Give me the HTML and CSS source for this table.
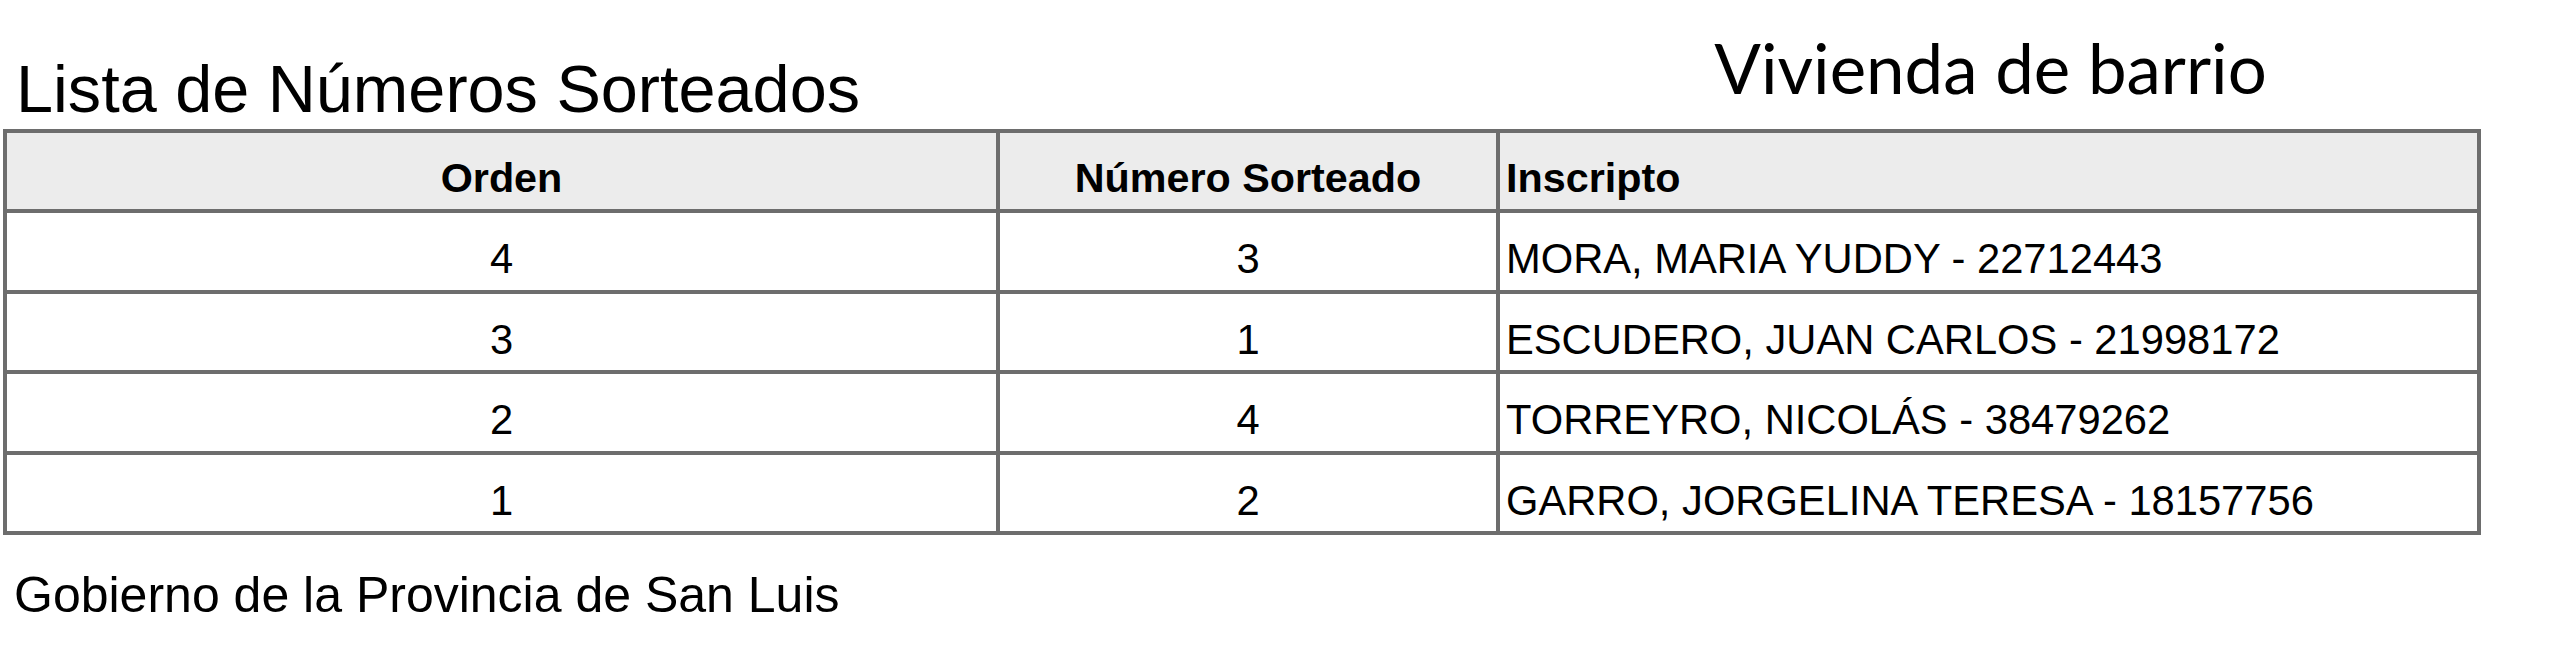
FILE: index.html
```html
<!DOCTYPE html>
<html lang="es">
<head>
<meta charset="utf-8">
<title>Lista de Números Sorteados</title>
<link rel="stylesheet" href="styles.css">
</head>
<body>
<div class="page">
  <header class="head">
    <h1 class="title">Lista de Números Sorteados</h1>
    <div class="subtitle">Vivienda de barrio</div>
  </header>
  <table class="draw">
    <colgroup>
      <col class="c-orden">
      <col class="c-num">
      <col class="c-name">
    </colgroup>
    <thead>
      <tr>
        <th class="center">Orden</th>
        <th class="center">Número Sorteado</th>
        <th class="left">Inscripto</th>
      </tr>
    </thead>
    <tbody>
      <tr>
        <td class="center">4</td>
        <td class="center">3</td>
        <td class="left">MORA, MARIA YUDDY - 22712443</td>
      </tr>
      <tr>
        <td class="center">3</td>
        <td class="center">1</td>
        <td class="left">ESCUDERO, JUAN CARLOS - 21998172</td>
      </tr>
      <tr>
        <td class="center">2</td>
        <td class="center">4</td>
        <td class="left">TORREYRO, NICOLÁS - 38479262</td>
      </tr>
      <tr>
        <td class="center">1</td>
        <td class="center">2</td>
        <td class="left">GARRO, JORGELINA TERESA - 18157756</td>
      </tr>
    </tbody>
  </table>
  <p class="footer">Gobierno de la Provincia de San Luis</p>
</div>
</body>
</html>
```

FILE: styles.css
```css
html, body {
  margin: 0;
  padding: 0;
  background: #ffffff;
}

body {
  font-family: "Liberation Sans", Arial, sans-serif;
  color: #000000;
}

.page {
  width: 2478px;
  padding-left: 3px;
}

.head {
  display: grid;
  grid-template-columns: 1497px 981px;
  align-items: start;
  height: 129px;
}

.title {
  margin: 51px 0 0 13px;
  font-size: 66.6px;
  font-weight: normal;
  line-height: 76px;
  white-space: nowrap;
}

.subtitle {
  margin-top: 26px;
  font-family: Lato, "Open Sans", sans-serif;
  font-size: 69px;
  line-height: 83px;
  text-align: center;
  white-space: nowrap;
}

.draw {
  width: 2478px;
  table-layout: fixed;
  border-collapse: separate;
  border-spacing: 0;
  border-left: 4px solid #6d6d6d;
  border-top: 4px solid #6d6d6d;
}

.c-orden { width: 993px; }
.c-num { width: 500px; }
.c-name { width: 981px; }

.draw th,
.draw td {
  box-sizing: border-box;
  border-right: 4px solid #6d6d6d;
  border-bottom: 4px solid #6d6d6d;
  padding: 22px 6px 0;
  vertical-align: top;
  font-size: 41.7px;
  line-height: 47px;
  white-space: nowrap;
}

.draw th {
  background: #ececec;
  font-weight: bold;
  font-size: 41.3px;
}

.draw thead tr { height: 80px; }
.draw tbody tr { height: 80.5px; }

.center { text-align: center; }
.left { text-align: left; }

.footer {
  margin: 31px 0 0 11px;
  font-size: 50px;
  line-height: 58px;
}
```
